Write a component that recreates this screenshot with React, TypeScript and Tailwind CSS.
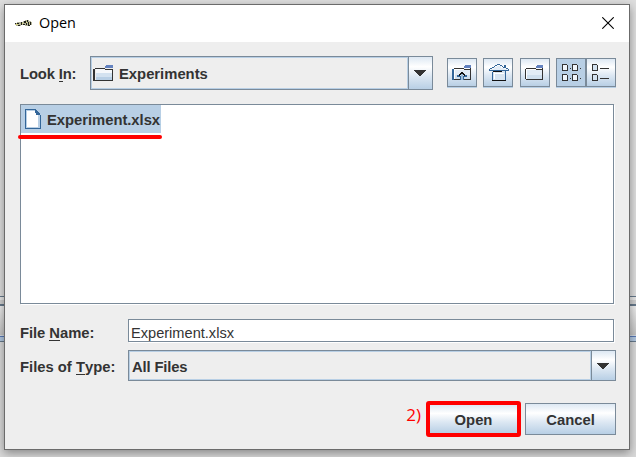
import type { ReactNode } from 'react';

const ramp = 'bg-[linear-gradient(180deg,#dde8f3_0%,#ffffff_30%,#dde8f3_60%,#b8cfe5_100%)]';

function Tool({ children, className = '' }: { children: ReactNode; className?: string }) {
  return (
    <button className={`h-[29px] w-[30px] shrink-0 border border-[#7a8a99] shadow-[0_1px_0_#b8cfe5] ${className}`}>
      <svg width="28" height="27" viewBox="0 0 28 27" shapeRendering="crispEdges" fill="none">
        {children}
      </svg>
    </button>
  );
}

function FolderBody() {
  return (
    <>
      <path d="M6 10H22V20H6Z" fill="#e2ecf6" />
      <path d="M6 16H22V20H6Z" fill="#cfdfee" />
      <path d="M5 10H6V20H5ZM6 9H16V10H6ZM6 20H22V21H6ZM22 9H23V21H22ZM16 10H22V11H16Z" fill="#333" />
      <path d="M6 10H16V11H7V20H6Z" fill="#fff" />
      <path d="M17 6H23V9H16V7H17Z" fill="#6382bf" />
    </>
  );
}

function Arrow() {
  return (
    <svg width="12" height="6" viewBox="0 0 12 6" shapeRendering="crispEdges">
      <path d="M0 0H12V1H11V2H10V3H9V4H8V5H7V6H5V5H4V4H3V3H2V2H1V1H0Z" fill="#333" />
    </svg>
  );
}

function Combo({ children, className }: { children: ReactNode; className: string }) {
  return (
    <div className={`flex border border-[#7a8a99] ${className}`}>
      <div className="flex min-w-0 flex-1 items-center border border-[#b8cfe5]">{children}</div>
      <div className={`flex w-[24px] shrink-0 items-center justify-center border-l border-[#7a8a99] pr-px ${ramp}`}>
        <Arrow />
      </div>
    </div>
  );
}

function Label({ children, className = '' }: { children: ReactNode; className?: string }) {
  return <span className={`shrink-0 whitespace-nowrap ${className}`}>{children}</span>;
}

function Mnemonic({ children }: { children: ReactNode }) {
  return <span className="inline-block h-[15px] border-b border-[#333] leading-[15px]">{children}</span>;
}

function Backdrop() {
  return (
    <div className="flex h-full flex-col bg-[#d9d9d9]">
      <div className="h-[296px] shrink-0 bg-[#dedede]" />
      <div className="h-px bg-[#66798b]" />
      <div className="h-[3px] bg-[#e6e6e6]" />
      <div className="h-1 bg-[#d0d0d0]" />
      <div className="h-[2px] bg-[#66798b]" />
      <div className="h-[29px] bg-gradient-to-b from-[#ededed] to-[#c3c3c3]" />
      <div className="h-px bg-[#d1d8df]" />
      <div className="h-px bg-[#5878b5]" />
      <div className="h-1 bg-[#b1c7e0]" />
      <div className="h-px bg-[#66798b]" />
    </div>
  );
}

export default function App() {
  return (
    <div className="relative h-[457px] w-[636px] overflow-hidden font-['Liberation_Sans',Arial,sans-serif] text-[14.800px] font-bold leading-[18px] text-[#333]">
      <Backdrop />
      <main className="absolute left-1 top-1 flex h-[446px] w-[626px] flex-col border border-[#6b6b6b] bg-[#eee] shadow-[0_3px_9px_rgba(0,0,0,0.38)]">
        <header className="flex h-[37px] shrink-0 items-center bg-white pl-[10px] pr-[15px] text-black">
          <svg width="18" height="9" viewBox="0 0 18 9" shapeRendering="crispEdges" className="mb-px">
            <path d="M0 4H2V3H8V2H10V1H14V2H16V3H17V6H15V7H10V6H6V7H1V6H0Z" fill="#b4b59b" />
            <path d="M0 4h1v1H0zM2 4h2v1H2zM3 6h2v1H3zM6 3h1v3H6zM8 5h2v1H8zM9 2h2v2H9zM12 1h1v2h-1zM11 4h1v2h-1zM13 3h1v4h-1zM15 3h1v3h-1zM14 6h1v1h-1z" fill="#202018" />
            <path d="M1 5h2v1H1zM7 4h1v1H7zM11 3h1v1h-1zM14 4h1v1h-1z" fill="#d9d477" />
          </svg>
          <h1 className="-mt-px ml-[6px] font-['Open_Sans','Noto_Sans',sans-serif] text-[14.400px] font-normal leading-5">Open</h1>
          <svg width="12" height="12" viewBox="0 0 12 12" className="-mt-px ml-auto">
            <path d="M.3 .3 11.700 11.700M11.700 .3 .3 11.700" stroke="#000" strokeWidth="1.100" fill="none" />
          </svg>
        </header>

        <section className="flex h-[48px] shrink-0 pl-[15px] pt-[14px]">
          <Label className="mt-[9px] w-[70px] tracking-[-0.15px]">Look <Mnemonic>I</Mnemonic>n:</Label>
          <Combo className="h-[34px] w-[343px]">
            <svg width="21" height="17" viewBox="0 0 21 17" shapeRendering="crispEdges" className="ml-px">
              <path d="M3 4H19V15H3Z" fill="#f5f8fb" />
              <path d="M3 8H19V12H3Z" fill="#d3e2f0" />
              <path d="M3 12H19V15H3Z" fill="#b8cfe5" />
              <path d="M1 4H2V16H1ZM0 4H1V16H0ZM2 3H12V4H2ZM12 4H20V5H12ZM19 4H20V16H19ZM1 15H20V16H1Z" fill="#333" />
              <path d="M13 0H20V3H12V1H13Z" fill="#6382bf" />
            </svg>
            <span className="ml-[5px] mt-px">Experiments</span>
          </Combo>
          <div className="ml-[14px] mt-[2px] flex">
            <Tool className={ramp}>
              <FolderBody />
              <path d="M4 10H6V21H4Z" fill="#336699" />
              <path d="M13 13H15V14H16V15H17V16H18V17H16V16H15V15H13V16H12V17H10V16H11V15H12V14H13Z" fill="#111" />
              <path d="M13 15H15V21H13Z" fill="#9cbcd9" />
              <path d="M9 16H11V17H13V21H12V18H9ZM17 16H19V18H16V21H15V17H17Z" fill="#336699" />
            </Tool>
            <Tool className={`ml-[6px] ${ramp}`}>
              <path d="M8 12H21V21H8Z" fill="#d8e5f1" />
              <path d="M7 11H23V10H20V9H17V7H13V8H10V10H7Z" fill="#e2ecf6" />
              <path d="M8.500 13V21M21.500 12V21M5.500 10V12M24.500 10V12M5 11.500H8M22 11.500H25M6 9.500H8M8 8.500H10M10 7.500H11M11 6.500H13M13 5.500H16M16 6.500H18M18 7.500H19M19 8.500H22M22 9.500H24M8 11.500H22" stroke="#336699" />
              <path d="M20 6H22V9H20Z" fill="#336699" />
              <path d="M9 12.500H18M8 21.500H22" stroke="#111" />
              <path d="M10.500 13V20M10 14.500H20" stroke="#fff" />
            </Tool>
            <Tool className={`ml-[7px] ${ramp}`}><g transform="translate(-1)"><FolderBody /></g></Tool>
            <Tool className="ml-[6px] bg-[#b8cfe5]">
              <path d="M6 6H10V12H6ZM16 6H20V12H16ZM6 16H10V22H6ZM16 16H20V22H16Z" fill="#eef4fa" />
              <path d="M5.500 5.500H9.500L10.500 6.500V11.500H5.500ZM15.500 5.500H19.500L20.500 6.500V11.500H15.500ZM5.500 15.500H9.500L10.500 16.500V21.500H5.500ZM15.500 15.500H19.500L20.500 16.500V21.500H15.500ZM13 9.500H14M23 9.500H24M13 19.500H14M23 19.500H24" stroke="#333" />
            </Tool>
            <Tool className={ramp}>
              <path d="M6 6H10V12H6ZM6 16H10V22H6Z" fill="#d3e2f0" />
              <path d="M5.500 5.500H9.500L10.500 6.500V11.500H5.500ZM5.500 15.500H9.500L10.500 16.500V21.500H5.500ZM13 9.500H22M13 19.500H22" stroke="#333" />
            </Tool>
          </div>
        </section>

        <section className="ml-[15px] mt-[14px] h-[200px] w-[594px] shrink-0 border border-[#7a8a99] bg-white shadow-[1px_1px_0_#fff]">
          <div className="flex h-7 w-[140px] items-center bg-[#b8cfe5] pl-1">
            <svg width="16" height="20" viewBox="0 0 16 20" shapeRendering="crispEdges">
              <path d="M0 0H11V1H12V2H13V3H14V4H15V6H16V20H0Z" fill="#336699" />
              <path d="M1 1H10V6H15V19H1Z" fill="#b8cfe5" />
              <path d="M2 2H10V4H11V6H13V18H2Z" fill="#fff" />
              <path d="M10 2H11V3H12V4H13V5H14V6H12V5H11V4H10Z" fill="#336699" />
            </svg>
            <span className="ml-[6px] mt-px tracking-[-0.03px]">Experiment.xlsx</span>
          </div>
          <div className="-ml-[3px] mt-[2px] h-1 w-[144px] rounded-full bg-[#f00]" />
        </section>

        <section className="mt-[15px] flex h-6 shrink-0 pl-[15px]">
          <Label className="mt-[5px] w-[108px] tracking-[-0.05px]">File <Mnemonic>N</Mnemonic>ame:</Label>
          <div className="flex h-[23px] w-[486px] items-center border border-[#7a8a99] bg-white pl-[2px] pt-[5px] text-[14.600px] font-normal shadow-[1px_1px_0_#fff]">Experiment.xlsx</div>
        </section>
        <section className="mt-[7px] flex h-[31px] shrink-0 items-center pl-[15px]">
          <Label className="mt-[2px] w-[108px]">Files of <Mnemonic>T</Mnemonic>ype:</Label>
          <Combo className="h-[31px] w-[488px]"><span className="ml-[2px] mt-[2px] tracking-[-0.15px]">All Files</span></Combo>
        </section>

        <footer className="ml-auto mr-[13px] mt-5 flex h-[36px] shrink-0 items-center">
          <span className="mb-[8px] mr-[5px] font-['Open_Sans','Noto_Sans',sans-serif] text-[17px] font-normal text-[#f00]">2)</span>
          <button className={`h-[36px] w-[95px] rounded-[3px] border-4 border-[#f00] pt-px font-bold ${ramp}`}>Open</button>
          <button className={`mb-px ml-1 h-8 w-[91px] border border-[#7a8a99] pt-[2px] font-bold ${ramp}`}>Cancel</button>
        </footer>
      </main>
    </div>
  );
}
